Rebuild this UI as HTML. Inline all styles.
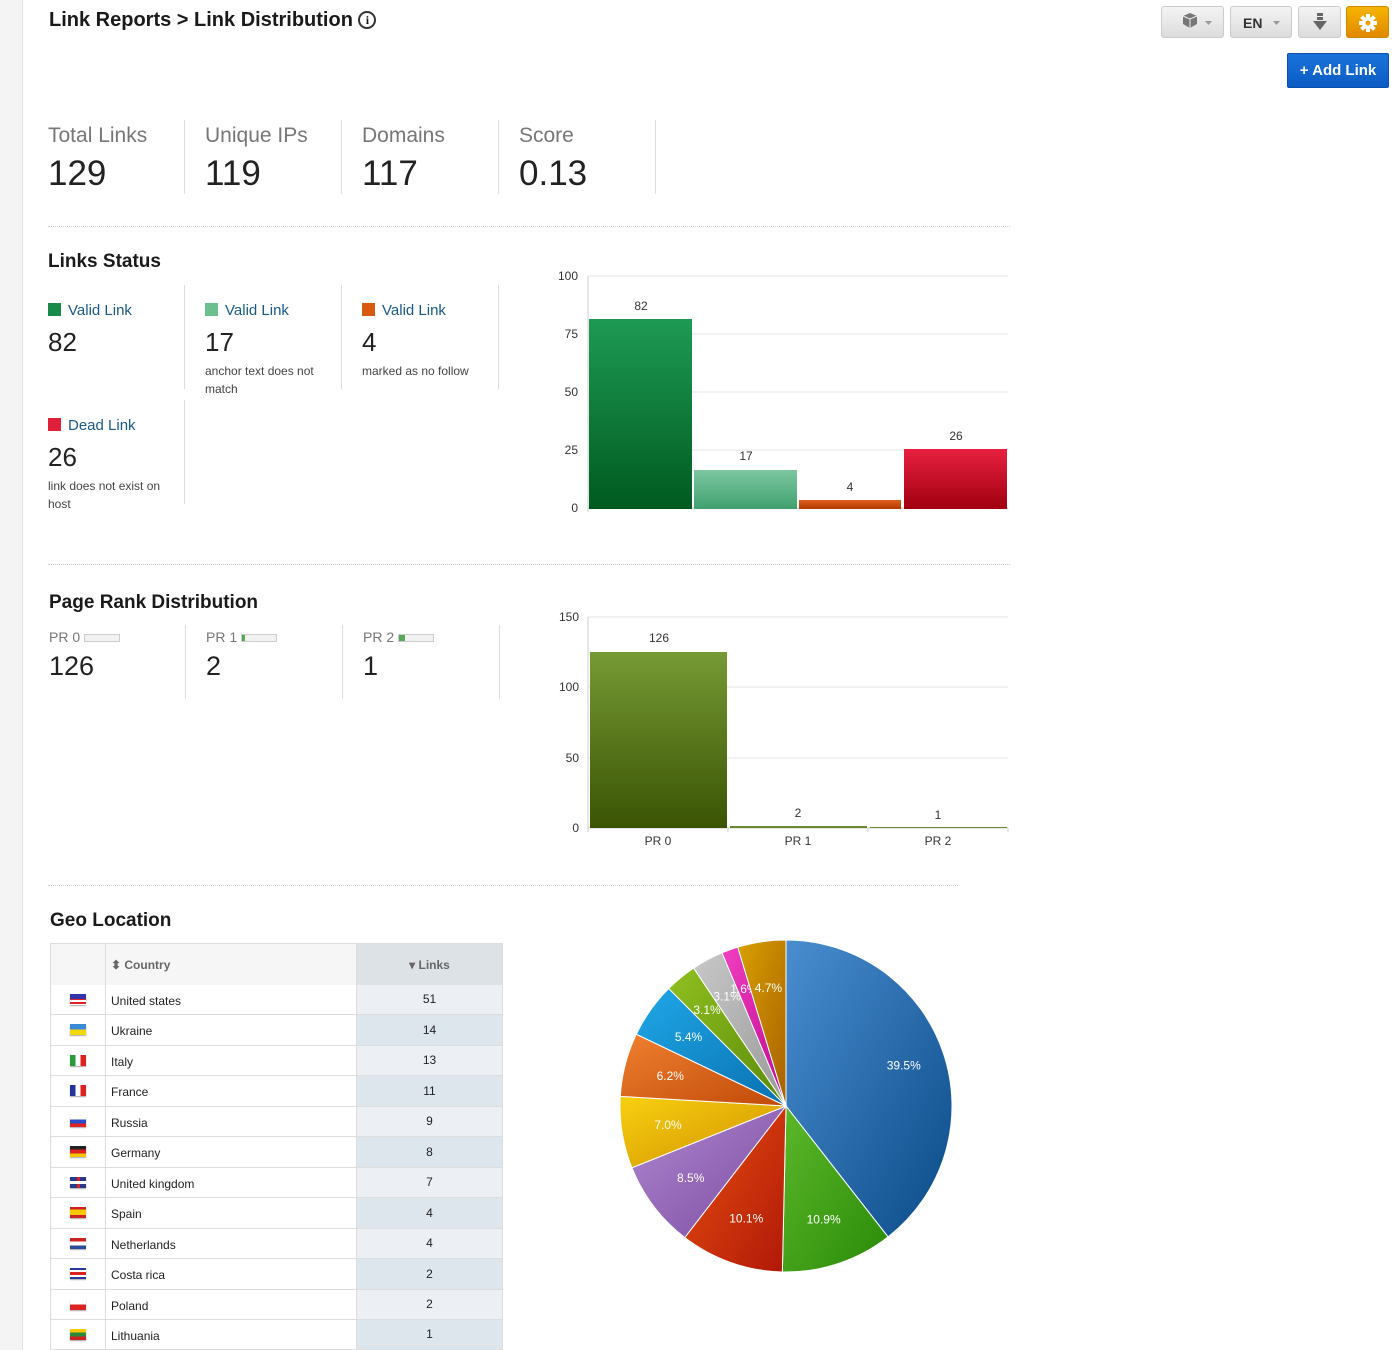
<!DOCTYPE html>
<html><head><meta charset="utf-8"><style>
*{box-sizing:border-box;margin:0;padding:0}
body{width:1399px;height:1350px;overflow:hidden;background:#fff;font-family:"Liberation Sans",sans-serif;color:#222;position:relative}
.abs{position:absolute}
.side{left:0;top:0;width:23px;height:1350px;background:#f4f4f4;border-right:1px solid #e2e2e2}
h1{position:absolute;left:49px;top:9px;font-size:20px;font-weight:bold;color:#1a1a1a}
.btn{position:absolute;top:6px;height:32px;border:1px solid #ccc;border-radius:3px;background:linear-gradient(#f4f4f4,#dcdcdc)}
.stat .l{font-size:21px;color:#777}
.stat .v{font-size:35px;color:#222;margin-top:6px}
.vr{position:absolute;width:1px;background:#ddd}
.hr{position:absolute;height:0;border-top:1px dotted #ccc}
h2{position:absolute;font-size:19px;font-weight:bold;color:#1a1a1a}
.sq{display:inline-block;width:13px;height:13px;vertical-align:-1px;margin-right:7px}
.ls .t{font-size:15px;color:#1a5a8a}
.ls .n{font-size:26px;margin-top:8px}
.ls .d{font-size:12px;color:#444;line-height:18px;margin-top:4px}
table{border-collapse:collapse;font-size:12px}
td{border:1px solid #ddd;height:30.4px;padding:0 5px}
svg text{font-family:"Liberation Sans",sans-serif}
</style></head><body>
<div class="abs side"></div>
<h1>Link Reports &gt; Link Distribution <span style="display:inline-block;width:18px;height:18px;border:2px solid #333;border-radius:50%;font-size:12px;text-align:center;line-height:14px;vertical-align:2px;font-family:'Liberation Serif',serif">i</span></h1>
<div class="btn" style="left:1161px;width:63px"><svg width="63" height="32"><path d="M21 9l7-3 7 3v8l-7 4-7-4z" fill="#777"/><path d="M21 9l7 3 7-3M28 12v9" stroke="#eee" stroke-width="1" fill="none"/><path d="M43 14h7l-3.5 4z" fill="#999"/></svg></div>
<div class="btn" style="left:1230px;width:62px"><span class="abs" style="left:12px;top:8px;font-weight:bold;font-size:14px;color:#333">EN</span><svg class="abs" width="62" height="32"><path d="M42 14h7l-3.5 4z" fill="#999"/></svg></div>
<div class="btn" style="left:1298px;width:43px"><svg width="43" height="32"><rect x="18" y="6" width="6" height="3" fill="#666"/><rect x="18" y="10" width="6" height="3" fill="#666"/><path d="M14 14h14l-7 9z" fill="#666"/></svg></div>
<div class="btn" style="left:1346px;width:43px;border-color:#d08a00;background:linear-gradient(#f6b500,#e08800)"><svg width="43" height="32"><g transform="translate(21,16)" fill="#fff"><circle r="6"/><rect x="-2" y="-9" width="4" height="18"/><rect x="-2" y="-9" width="4" height="18" transform="rotate(45)"/><rect x="-2" y="-9" width="4" height="18" transform="rotate(90)"/><rect x="-2" y="-9" width="4" height="18" transform="rotate(135)"/><circle r="2.5" fill="#e8a000"/></g></svg></div>
<div class="abs" style="left:1287px;top:53px;width:102px;height:35px;background:linear-gradient(#1a73d9,#0b5cc4);border:1px solid #0a50a8;border-radius:2px;color:#fff;font-weight:bold;font-size:15px;text-align:center;line-height:33px">+ Add Link</div>

<div class="abs stat" style="left:48px;top:124px"><div class="l">Total Links</div><div class="v">129</div></div>
<div class="abs stat" style="left:205px;top:124px"><div class="l">Unique IPs</div><div class="v">119</div></div>
<div class="abs stat" style="left:362px;top:124px"><div class="l">Domains</div><div class="v">117</div></div>
<div class="abs stat" style="left:519px;top:124px"><div class="l">Score</div><div class="v">0.13</div></div>
<div class="vr" style="left:184px;top:120px;height:74px"></div><div class="vr" style="left:341px;top:120px;height:74px"></div><div class="vr" style="left:498px;top:120px;height:74px"></div><div class="vr" style="left:655px;top:120px;height:74px"></div>
<div class="hr" style="left:48px;top:226px;width:962px"></div>

<h2 style="left:48px;top:251px">Links Status</h2>
<div class="abs ls" style="left:48px;top:302px"><div class="t"><span class="sq" style="background:#1a8a4a"></span>Valid Link</div><div class="n">82</div></div>
<div class="abs ls" style="left:205px;top:302px;width:125px"><div class="t"><span class="sq" style="background:#6cc090"></span>Valid Link</div><div class="n">17</div><div class="d">anchor text does not match</div></div>
<div class="abs ls" style="left:362px;top:302px;width:130px"><div class="t"><span class="sq" style="background:#d85a10"></span>Valid Link</div><div class="n">4</div><div class="d">marked as no follow</div></div>
<div class="abs ls" style="left:48px;top:417px;width:125px"><div class="t"><span class="sq" style="background:#e0203a"></span>Dead Link</div><div class="n">26</div><div class="d">link does not exist on host</div></div>
<div class="vr" style="left:184px;top:285px;height:104px"></div><div class="vr" style="left:341px;top:285px;height:104px"></div><div class="vr" style="left:498px;top:285px;height:104px"></div><div class="vr" style="left:184px;top:400px;height:104px"></div>

<svg class="abs" style="left:540px;top:260px" width="480" height="270">
<defs>
<linearGradient id="g1" x1="0" y1="0" x2="0" y2="1"><stop offset="0" stop-color="#1e9a55"/><stop offset="1" stop-color="#005a20"/></linearGradient>
<linearGradient id="g2" x1="0" y1="0" x2="0" y2="1"><stop offset="0" stop-color="#7cc8a0"/><stop offset="1" stop-color="#40a070"/></linearGradient>
<linearGradient id="g3" x1="0" y1="0" x2="0" y2="1"><stop offset="0" stop-color="#e06020"/><stop offset="1" stop-color="#b03a00"/></linearGradient>
<linearGradient id="g4" x1="0" y1="0" x2="0" y2="1"><stop offset="0" stop-color="#e82040"/><stop offset="1" stop-color="#a00010"/></linearGradient>
</defs>
<g stroke="#e4e4e4"><line x1="48" y1="16" x2="468" y2="16"/><line x1="48" y1="74" x2="468" y2="74"/><line x1="48" y1="132" x2="468" y2="132"/><line x1="48" y1="190" x2="468" y2="190"/><line x1="48" y1="248" x2="468" y2="248" stroke="#ccc"/><line x1="48" y1="16" x2="48" y2="252" stroke="#ccc"/></g>
<g font-size="12" fill="#333" text-anchor="end"><text x="38" y="20">100</text><text x="38" y="78">75</text><text x="38" y="136">50</text><text x="38" y="194">25</text><text x="38" y="252">0</text></g>
<rect x="49" y="59" width="103" height="190" fill="url(#g1)"/><rect x="154" y="210" width="103" height="39" fill="url(#g2)"/><rect x="259" y="240" width="102" height="9" fill="url(#g3)"/><rect x="364" y="189" width="103" height="60" fill="url(#g4)"/>
<g font-size="12" fill="#333" text-anchor="middle"><text x="101" y="50">82</text><text x="206" y="200">17</text><text x="310" y="231">4</text><text x="416" y="180">26</text></g>
</svg>
<div class="hr" style="left:48px;top:564px;width:962px"></div>

<h2 style="left:49px;top:592px">Page Rank Distribution</h2>
<div class="abs" style="left:49px;top:629px;font-size:14px;color:#777">PR 0 <span style="display:inline-block;width:36px;height:8px;border:1px solid #ccc;background:#f2f2f2;vertical-align:0"></span></div>
<div class="abs" style="left:206px;top:629px;font-size:14px;color:#777">PR 1 <span style="display:inline-block;width:36px;height:8px;border:1px solid #ccc;background:linear-gradient(90deg,#5a5 3px,#f2f2f2 3px);vertical-align:0"></span></div>
<div class="abs" style="left:363px;top:629px;font-size:14px;color:#777">PR 2 <span style="display:inline-block;width:36px;height:8px;border:1px solid #ccc;background:linear-gradient(90deg,#5a5 6px,#f2f2f2 6px);vertical-align:0"></span></div>
<div class="abs" style="left:49px;top:651px;font-size:27px">126</div><div class="abs" style="left:206px;top:651px;font-size:27px">2</div><div class="abs" style="left:363px;top:651px;font-size:27px">1</div>
<div class="vr" style="left:185px;top:625px;height:74px"></div><div class="vr" style="left:342px;top:625px;height:74px"></div><div class="vr" style="left:499px;top:625px;height:74px"></div>

<svg class="abs" style="left:540px;top:600px" width="480" height="260">
<defs><linearGradient id="g5" x1="0" y1="0" x2="0" y2="1"><stop offset="0" stop-color="#769a34"/><stop offset="1" stop-color="#3a5404"/></linearGradient></defs>
<g stroke="#e4e4e4"><line x1="48" y1="17" x2="468" y2="17"/><line x1="48" y1="87" x2="468" y2="87"/><line x1="48" y1="158" x2="468" y2="158"/><line x1="48" y1="228" x2="468" y2="228" stroke="#ccc"/><line x1="48" y1="17" x2="48" y2="232" stroke="#ccc"/><line x1="188" y1="228" x2="188" y2="232" stroke="#ccc"/><line x1="328" y1="228" x2="328" y2="232" stroke="#ccc"/><line x1="468" y1="228" x2="468" y2="232" stroke="#ccc"/></g>
<g font-size="12" fill="#333" text-anchor="end"><text x="39" y="21">150</text><text x="39" y="91">100</text><text x="39" y="162">50</text><text x="39" y="232">0</text></g>
<rect x="50" y="52" width="137" height="176" fill="url(#g5)"/><rect x="190" y="226" width="137" height="2" fill="#6a8a30"/><rect x="330" y="227" width="137" height="1" fill="#6a8a30"/>
<g font-size="12" fill="#333" text-anchor="middle"><text x="119" y="42">126</text><text x="258" y="217">2</text><text x="398" y="219">1</text><text x="118" y="245">PR 0</text><text x="258" y="245">PR 1</text><text x="398" y="245">PR 2</text></g>
</svg>
<div class="hr" style="left:48px;top:885px;width:910px"></div>

<h2 style="left:50px;top:910px">Geo Location</h2>
<table class="abs" style="left:50px;top:943px;width:453px">
<tr style="height:43px;background:#f6f6f6;color:#666;font-weight:bold"><td style="width:55px"></td><td style="width:251px">⬍ Country</td><td style="background:#dde2e6;text-align:center">▾ Links</td></tr>
</table>
<div id="rows"></div>

<svg class="abs" style="left:600px;top:920px" width="380" height="380" id="pie"></svg>
<script>
var rows=[["United states",51,"us"],["Ukraine",14,"ua"],["Italy",13,"it"],["France",11,"fr"],["Russia",9,"ru"],["Germany",8,"de"],["United kingdom",7,"uk"],["Spain",4,"es"],["Netherlands",4,"nl"],["Costa rica",2,"cr"],["Poland",2,"pl"],["Lithuania",1,"lt"]];
var flags={us:"linear-gradient(#33a 45%,transparent 45%),repeating-linear-gradient(#d22 0 2px,#fff 2px 4px)",ua:"linear-gradient(#3a8ad8 50%,#f5d800 50%)",it:"linear-gradient(90deg,#2a9a3a 33%,#fff 33% 66%,#d22 66%)",fr:"linear-gradient(90deg,#22339a 33%,#fff 33% 66%,#d22 66%)",ru:"linear-gradient(#fff 33%,#2a4ac8 33% 66%,#d22 66%)",de:"linear-gradient(#222 33%,#d22 33% 66%,#f5c800 66%)",uk:"linear-gradient(#fff,#fff) center/100% 3px no-repeat,linear-gradient(#d22,#d22) center/3px 100% no-repeat,#2a3a8a",es:"linear-gradient(#c22 25%,#f5c800 25% 75%,#c22 75%)",nl:"linear-gradient(#c22 33%,#fff 33% 66%,#2a4a9a 66%)",cr:"linear-gradient(#2a3a9a 18%,#fff 18% 36%,#d22 36% 64%,#fff 64% 82%,#2a3a9a 82%)",pl:"linear-gradient(#fff 50%,#d22 50%)",lt:"linear-gradient(#f5c800 33%,#2a8a3a 33% 66%,#c22 66%)"};
var h='';rows.forEach(function(r,i){var y=Math.round(985+i*30.45),y2=Math.round(985+(i+1)*30.45),hh=y2-y;h+='<div class="abs" style="left:50px;top:'+y+'px;width:453px;height:'+hh+'px;border:1px solid #ddd;border-top:none;font-size:12px;background:#fff">'+
'<div class="abs" style="left:19px;top:9px;width:16px;height:11px;background:'+flags[r[2]]+';box-shadow:0 1px 1px #aaa"></div>'+
'<div class="abs" style="left:54px;top:0;width:1px;height:100%;background:#ddd"></div><div class="abs" style="left:60px;top:9px">'+r[0]+'</div>'+
'<div class="abs" style="left:305px;top:0;width:146px;height:'+(hh-1)+'px;background:'+(i%2?'#dde5ed':'#ecf0f4')+';border-left:1px solid #ddd;text-align:center;line-height:'+(hh-1)+'px">'+r[1]+'</div></div>';});
document.getElementById('rows').innerHTML=h;
var s=[[39.5,"#4a8ed0","#0a4a88"],[10.9,"#5cb82a","#2a8a08"],[10.1,"#e85010","#b01808"],[8.5,"#b088d0","#7a4aa0"],[7.0,"#f8d010","#d09000"],[6.2,"#f08030","#c04a08"],[5.4,"#20a8e8","#0870b0"],[3.1,"#90c020","#5a8a08"],[3.1,"#c8c8c8","#999"],[1.6,"#f040c0","#c00890"],[4.7,"#d8a000","#a86000"]];
var cx=186,cy=186,R=166,a=-Math.PI/2,p='',tot=100.1;
s.forEach(function(d,i){var b=a+d[0]/tot*2*Math.PI;var x1=cx+R*Math.cos(a),y1=cy+R*Math.sin(a),x2=cx+R*Math.cos(b),y2=cy+R*Math.sin(b);
p+='<defs><linearGradient id="p'+i+'" x1="0" y1="0" x2="1" y2="1"><stop offset="0" stop-color="'+d[1]+'"/><stop offset="1" stop-color="'+d[2]+'"/></linearGradient></defs>';
p+='<path d="M'+cx+','+cy+'L'+x1+','+y1+'A'+R+','+R+' 0 '+((b-a)>Math.PI?1:0)+',1 '+x2+','+y2+'Z" fill="url(#p'+i+')" stroke="#fff" stroke-width="1"/>';
var m=(a+b)/2,r2=d[0]<4?R*0.75:R*0.72;if(i==0)r2=R*0.75;
p+='<text x="'+(cx+r2*Math.cos(m))+'" y="'+(cy+r2*Math.sin(m)+4)+'" fill="#fff" font-size="12" text-anchor="middle">'+d[0].toFixed(1)+'%</text>';a=b;});
document.getElementById('pie').innerHTML=p;
</script>
</body></html>
